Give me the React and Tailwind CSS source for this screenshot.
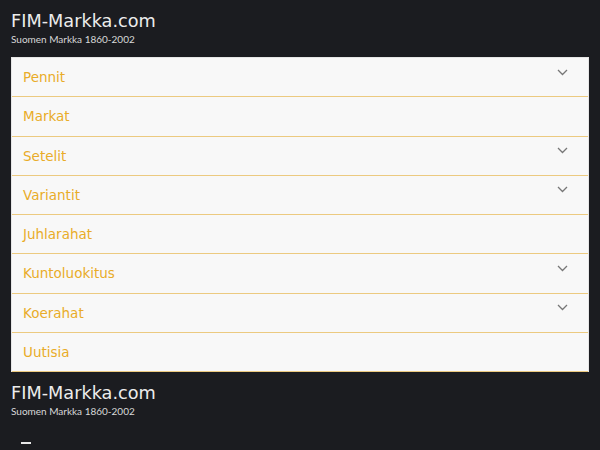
import React from 'react';

const items = [
    { label: 'Pennit', sub: true },
    { label: 'Markat', sub: false },
    { label: 'Setelit', sub: true },
    { label: 'Variantit', sub: true },
    { label: 'Juhlarahat', sub: false },
    { label: 'Kuntoluokitus', sub: true },
    { label: 'Koerahat', sub: true },
    { label: 'Uutisia', sub: false },
];

const Chevron = () => (
    <svg width="11" height="7" viewBox="0 0 11 7" className="text-[#777]">
        <path d="M1 1 L5.5 5.5 L10 1" fill="none" stroke="currentColor" strokeWidth="1.3" />
    </svg>
);

const Brand = () => (
    <div className="px-[11px] text-[#ececec]">
        <div className="text-[17.7px] leading-[22px] font-['DejaVu_Sans',sans-serif]">FIM-Markka.com</div>
        <div className="text-[10px] leading-[14px] font-['Lato',sans-serif] text-[#d8d8d8]">Suomen Markka 1860-2002</div>
    </div>
);

export default function App() {
    return (
        <div className="w-[600px] h-[450px] overflow-hidden bg-[#1b1c20]">
            {/* HEADER */}
            <div className="pt-[10px] pb-[11px]">
                <Brand />
            </div>

            {/* MENU */}
            <div className="mx-[11px] bg-[#f8f8f8] border-t border-x border-[#e6e6e6]">
                {items.map((item) => (
                    <div
                        key={item.label}
                        className="h-[39.25px] flex items-center justify-between pl-[11px] pr-[20px] border-b border-[#ecca80]"
                    >
                        <span className="text-[13.5px] text-[#e9ac28] font-['DejaVu_Sans',sans-serif]">{item.label}</span>
                        {item.sub && <span className="-mt-[10px]"><Chevron /></span>}
                    </div>
                ))}
            </div>

            {/* FOOTER BRAND */}
            <div className="pt-[10px]">
                <Brand />
            </div>
            <div className="mt-[24px] ml-[21px] w-[10px] h-[2px] bg-[#e8e8e8]" />
        </div>
    );
}
